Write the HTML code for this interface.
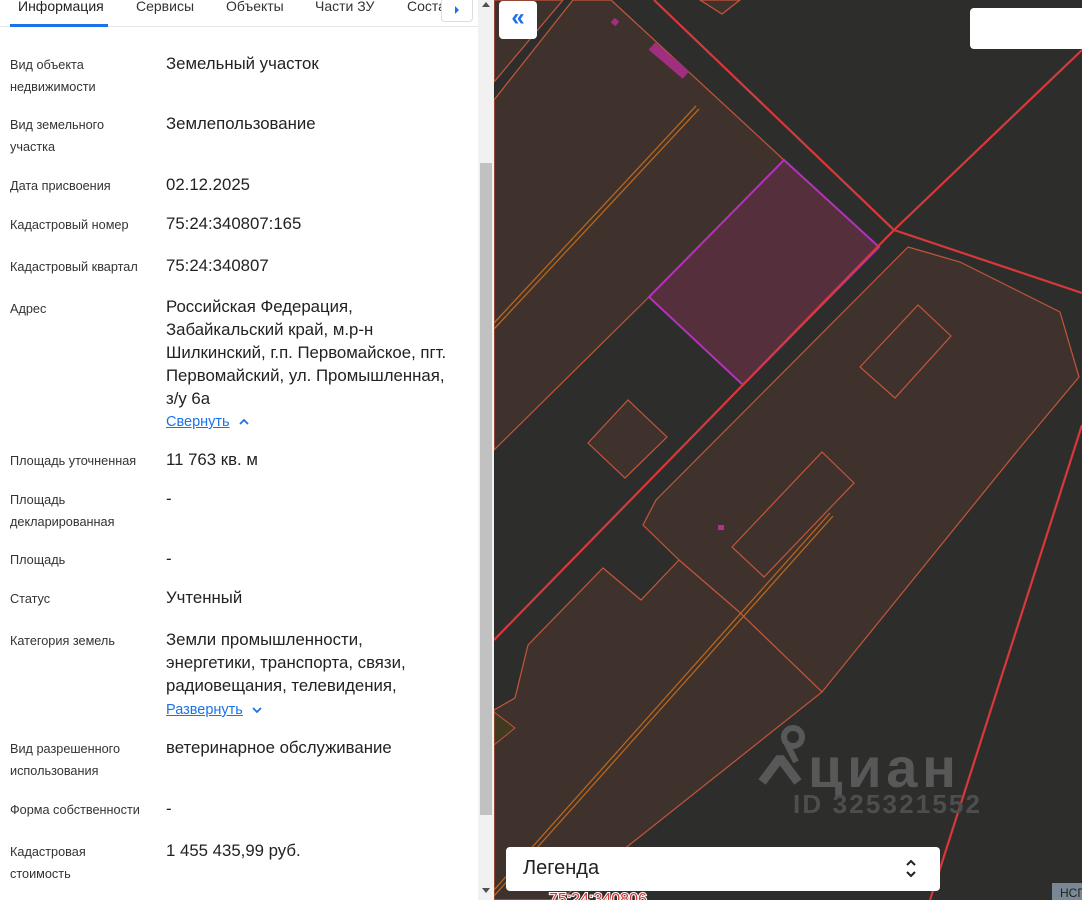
<!DOCTYPE html>
<html><head><meta charset="utf-8"><style>
*{margin:0;padding:0;box-sizing:border-box}
body{width:1082px;height:900px;overflow:hidden;position:relative;background:#fff;font-family:"Liberation Sans","DejaVu Sans",sans-serif}
.t{position:absolute;white-space:nowrap}
.tab{top:-2px;font-size:14px;color:#333}
.l{font-size:12.7px;color:#333;line-height:22px;left:10px}
.v{font-size:16.8px;color:#222;line-height:23px;left:166px}
.lnk{color:#1a73e8;text-decoration:underline;font-size:14.5px}
</style></head><body>
<div class="t tab" style="left:18px;color:#222">Информация</div>
<div class="t tab" style="left:136px">Сервисы</div>
<div class="t tab" style="left:226px">Объекты</div>
<div class="t tab" style="left:315px">Части ЗУ</div>
<div class="t tab" style="left:407px">Соста</div>
<div style="position:absolute;left:0;top:26px;width:478px;height:1px;background:#e6e6e6"></div>
<div style="position:absolute;left:10px;top:24px;width:98px;height:3px;background:#1a73e8"></div>
<div style="position:absolute;left:441px;top:0;width:32px;height:22px;background:#fff;border:1px solid #ddd;border-top:none;border-radius:0 0 4px 4px"></div>
<div style="position:absolute;left:455px;top:6px;width:0;height:0;border-left:4px solid #1a73e8;border-top:4px solid transparent;border-bottom:4px solid transparent"></div>
<div style="position:absolute;left:478px;top:0;width:16px;height:900px;background:#f1f1f1"></div>
<div style="position:absolute;left:480px;top:163px;width:12px;height:652px;background:#c1c1c1"></div>
<div style="position:absolute;left:482px;top:2px;border-bottom:5px solid #505050;border-left:4px solid transparent;border-right:4px solid transparent"></div>
<div style="position:absolute;left:482px;top:888px;border-top:5px solid #505050;border-left:4px solid transparent;border-right:4px solid transparent"></div>

<div class="t l" style="top:54px">Вид объекта<br>недвижимости</div>
<div class="t v" style="top:52px">Земельный участок</div>
<div class="t l" style="top:114px">Вид земельного<br>участка</div>
<div class="t v" style="top:112px">Землепользование</div>
<div class="t l" style="top:175px">Дата присвоения</div>
<div class="t v" style="top:173px">02.12.2025</div>
<div class="t l" style="top:214px">Кадастровый номер</div>
<div class="t v" style="top:212px">75:24:340807:165</div>
<div class="t l" style="top:256px">Кадастровый квартал</div>
<div class="t v" style="top:254px">75:24:340807</div>
<div class="t l" style="top:298px">Адрес</div>
<div class="t v" style="top:295px">Российская Федерация,<br>Забайкальский край, м.р-н<br>Шилкинский, г.п. Первомайское, пгт.<br>Первомайский, ул. Промышленная,<br>з/у 6а</div>
<div class="t" style="left:166px;top:413px"><span class="lnk">Свернуть</span></div>
<svg style="position:absolute;left:238px;top:417px" width="12" height="10"><path d="M2 7 L6 3 L10 7" fill="none" stroke="#1a73e8" stroke-width="1.8"/></svg>
<div class="t l" style="top:450px">Площадь уточненная</div>
<div class="t v" style="top:448px">11 763 кв. м</div>
<div class="t l" style="top:489px">Площадь<br>декларированная</div>
<div class="t v" style="top:487px">-</div>
<div class="t l" style="top:549px">Площадь</div>
<div class="t v" style="top:547px">-</div>
<div class="t l" style="top:588px">Статус</div>
<div class="t v" style="top:586px">Учтенный</div>
<div class="t l" style="top:630px">Категория земель</div>
<div class="t v" style="top:628px">Земли промышленности,<br>энергетики, транспорта, связи,<br>радиовещания, телевидения,</div>
<div class="t" style="left:166px;top:701px"><span class="lnk">Развернуть</span></div>
<svg style="position:absolute;left:251px;top:705px" width="12" height="10"><path d="M2 3 L6 7 L10 3" fill="none" stroke="#1a73e8" stroke-width="1.8"/></svg>
<div class="t l" style="top:738px">Вид разрешенного<br>использования</div>
<div class="t v" style="top:736px">ветеринарное обслуживание</div>
<div class="t l" style="top:799px">Форма собственности</div>
<div class="t v" style="top:797px">-</div>
<div class="t l" style="top:841px">Кадастровая<br>стоимость</div>
<div class="t v" style="top:839px">1 455 435,99 руб.</div>

<svg style="position:absolute;left:494px;top:0" width="588" height="900" viewBox="494 0 588 900">
<rect x="494" y="0" width="588" height="900" fill="#2d2e2b"/>
<g fill="#3f322d" stroke="#c4553a" stroke-width="1.2">
<polygon points="494,0 611,0 784,160 649,297 494,450"/>
<polygon points="908,247 960,262 1060,312 1079,377 1018,450 822,692 737,610 690,575 679,560 643,525 656,500"/>
<polygon points="679,560 641,600 603,568 528,645 515,698 494,710 494,900 560,900 822,692 737,610"/>
<polygon points="860,367 918,305 951,336 895,398"/>
<polygon points="588,443 628,400 667,437 625,478"/>
<polygon points="732,547 822,452 854,483 764,577"/>
<polygon points="700,0 740,0 722,14"/>
</g>
<polygon points="494,712 515,728 494,745" fill="#3f3a20" stroke="#c4553a"/>
<polygon points="494,82 563,0 573,0 494,100" fill="#2d2e2b"/>
<path d="M494,82 L563,0 M494,100 L573,0" stroke="#c4553a" stroke-width="1.2" fill="none"/>
<polygon points="784,160 879,247 743,385 649,297" fill="#552f3c" stroke="#b233b8" stroke-width="2"/>
<g stroke="#d8383a" stroke-width="2.2" fill="none">
<path d="M654,0 L894,230 L494,640"/>
<path d="M894,230 L1082,50"/>
<path d="M894,230 L1082,293"/>
<path d="M1082,425 L930,900"/>
</g>
<g stroke="#b8661f" stroke-width="1.3" fill="none">
<path d="M696,106 L494,323 M699,109 L494,329"/>
<path d="M830,513 L494,890 M833,516 L494,896"/>
</g>
<path d="M652,46 L686,75" stroke="#a0307f" stroke-width="10"/>
<rect x="612" y="19" width="6" height="6" fill="#a0307f" transform="rotate(40 615 22)"/>
<rect x="718" y="525" width="6" height="5" fill="#b0309a"/>
<path d="M762,782 L780,758 L798,782" fill="none" stroke="#585858" stroke-width="9" stroke-linejoin="bevel"/>
<circle cx="793" cy="737" r="9" fill="none" stroke="#585858" stroke-width="6"/>
<path d="M787,744 L796,762" stroke="#585858" stroke-width="6"/>
<text x="808" y="787" font-family="Liberation Sans,sans-serif" font-weight="bold" font-size="56" fill="#585858" textLength="148">циан</text>
<text x="793" y="813" font-family="Liberation Sans,sans-serif" font-weight="bold" font-size="26" fill="#4e4e4e" textLength="187">ID 325321552</text>
<text x="549" y="904" font-family="Liberation Sans,sans-serif" font-size="16" fill="#d83a3a" stroke="#fff" stroke-width="2" paint-order="stroke">75:24:340806</text>
<rect x="1052" y="883" width="30" height="17" fill="#7a8896"/>
<text x="1060" y="897" font-family="Liberation Sans,sans-serif" font-size="12" fill="#222">НСП</text>
</svg>
<div style="position:absolute;left:499px;top:1px;width:38px;height:38px;background:#fff;border-radius:4px;color:#1a73e8;font-size:24px;font-weight:bold;text-align:center;line-height:34px">«</div>
<div style="position:absolute;left:970px;top:8px;width:120px;height:41px;background:#fff;border-radius:4px"></div>
<div style="position:absolute;left:506px;top:847px;width:434px;height:44px;background:#fff;border-radius:4px"></div>
<div class="t" style="left:523px;top:857px;font-size:20px;color:#222">Легенда</div>
<svg style="position:absolute;left:904px;top:858px" width="14" height="22"><path d="M3 7 L7 3 L11 7 M3 14 L7 18 L11 14" fill="none" stroke="#222" stroke-width="2"/></svg>
</body></html>
